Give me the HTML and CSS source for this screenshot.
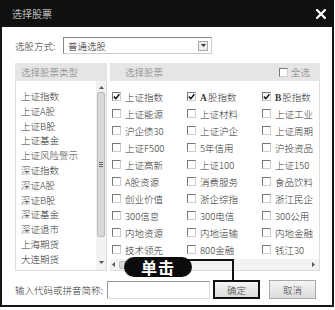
FILE: index.html
```html
<!DOCTYPE html>
<html lang="zh">
<head>
<meta charset="utf-8">
<title>选择股票</title>
<link rel="stylesheet" href="styles.css">
</head>
<body>
<div class="dialog">
  <div class="titlebar">
    <span class="title">选择股票</span>
    <svg class="close" width="10" height="10" viewBox="0 0 10 10"><path d="M1 1L9 9M9 1L1 9" stroke="#fff" stroke-width="2.2" stroke-linecap="square"/></svg>
  </div>
  <div class="body">
    <div class="mode-row">
      <span class="mode-label">选股方式:</span>
      <div class="select">
        <span class="select-text">普通选股</span>
        <span class="drop"><svg width="5" height="3" viewBox="0 0 5 3"><path d="M0 0H5L2.5 3Z" fill="#333"/></svg></span>
      </div>
    </div>
    <div class="panels">
      <div class="left-panel">
        <div class="head head-left">选择股票类型</div>
        <div class="list-box">
          <ul class="type-list">
            <li>上证指数</li>
            <li>上证A股</li>
            <li>上证B股</li>
            <li>上证基金</li>
            <li>上证风险警示</li>
            <li>深证指数</li>
            <li>深证A股</li>
            <li>深证B股</li>
            <li>深证基金</li>
            <li>深证退市</li>
            <li>上海期货</li>
            <li>大连期货</li>
            <li>郑州期货</li>
          </ul>
          <div class="vscroll">
            <svg class="arr" width="5" height="3" viewBox="0 0 5 3"><path d="M0 3H5L2.5 0Z" fill="#555"/></svg>
            <div class="vthumb"><span class="grip"></span></div>
            <svg class="arr" width="5" height="3" viewBox="0 0 5 3"><path d="M0 0H5L2.5 3Z" fill="#555"/></svg>
          </div>
        </div>
      </div>
      <div class="right-panel">
        <div class="head head-right">
          <span>选择股票</span>
          <span class="all"><span class="cb"></span>全选</span>
        </div>
        <div class="check-area">
          <div class="check-grid">
            <label class="item"><span class="cb on"><svg width="7" height="7" viewBox="0 0 7 7"><path d="M0.8 3.6L2.8 5.6L6.4 1.2" stroke="#111" stroke-width="1.5" fill="none"/></svg></span>上证指数</label>
            <label class="item"><span class="cb on"><svg width="7" height="7" viewBox="0 0 7 7"><path d="M0.8 3.6L2.8 5.6L6.4 1.2" stroke="#111" stroke-width="1.5" fill="none"/></svg></span><span><b class="serif">A</b>股指数</span></label>
            <label class="item"><span class="cb on"><svg width="7" height="7" viewBox="0 0 7 7"><path d="M0.8 3.6L2.8 5.6L6.4 1.2" stroke="#111" stroke-width="1.5" fill="none"/></svg></span><span><b class="serif">B</b>股指数</span></label>
            <label class="item"><span class="cb"></span>上证能源</label>
            <label class="item"><span class="cb"></span>上证材料</label>
            <label class="item"><span class="cb"></span>上证工业</label>
            <label class="item"><span class="cb"></span>沪企债30</label>
            <label class="item"><span class="cb"></span>上证沪企</label>
            <label class="item"><span class="cb"></span>上证周期</label>
            <label class="item"><span class="cb"></span>上证F500</label>
            <label class="item"><span class="cb"></span>5年信用</label>
            <label class="item"><span class="cb"></span>沪投资品</label>
            <label class="item"><span class="cb"></span>上证高新</label>
            <label class="item"><span class="cb"></span>上证100</label>
            <label class="item"><span class="cb"></span>上证150</label>
            <label class="item"><span class="cb"></span>A股资源</label>
            <label class="item"><span class="cb"></span>消费服务</label>
            <label class="item"><span class="cb"></span>食品饮料</label>
            <label class="item"><span class="cb"></span>创业价值</label>
            <label class="item"><span class="cb"></span>浙企综指</label>
            <label class="item"><span class="cb"></span>浙江民企</label>
            <label class="item"><span class="cb"></span>300信息</label>
            <label class="item"><span class="cb"></span>300电信</label>
            <label class="item"><span class="cb"></span>300公用</label>
            <label class="item"><span class="cb"></span>内地资源</label>
            <label class="item"><span class="cb"></span>内地运输</label>
            <label class="item"><span class="cb"></span>内地金融</label>
            <label class="item"><span class="cb"></span>技术领先</label>
            <label class="item"><span class="cb"></span>800金融</label>
            <label class="item"><span class="cb"></span>钱江30</label>
          </div>
          <div class="hscroll">
            <svg class="harr" width="3" height="5" viewBox="0 0 3 5"><path d="M3 0V5L0 2.5Z" fill="#555"/></svg>
            <div class="hthumb"></div>
            <svg class="harr" width="3" height="5" viewBox="0 0 3 5"><path d="M0 0V5L3 2.5Z" fill="#555"/></svg>
          </div>
        </div>
      </div>
    </div>
    <div class="bottom-row">
      <span class="code-label">输入代码或拼音简称:</span>
      <div class="code-input"></div>
      <button class="btn btn-ok">确定</button>
      <button class="btn btn-cancel">取消</button>
    </div>
  </div>
  <div class="callout-line"></div>
  <div class="callout">单击</div>
</div>
</body>
</html>
```

FILE: styles.css
```css
* { box-sizing: border-box; }
html, body { margin: 0; padding: 0; background: #fff; }
body {
  font-family: "Noto Sans CJK SC", "Noto Sans", sans-serif;
  font-size: 9.5px;
  font-weight: 300;
  color: #333;
}
.dialog {
  position: relative;
  width: 334px;
  height: 307px;
  border: 2px solid #151515;
  border-top: 0;
  background: #fff;
}
.titlebar {
  height: 27px;
  background: #111;
  margin: 0 -2px;
  display: flex;
  align-items: center;
  justify-content: space-between;
  padding: 0 8px 0 12px;
}
.title { color: #f2f2f2; font-size: 10px; }
.close { display: block; }

.body { padding: 10px 12px 0 13px; }

.mode-row { display: flex; align-items: center; height: 17px; }
.mode-label { width: 48px; white-space: nowrap; }
.select {
  width: 149px;
  height: 17px;
  border: 1px solid #888;
  border-right-color: #ccc;
  border-bottom-color: #ccc;
  display: flex;
  align-items: center;
  justify-content: space-between;
  padding: 0 3px 0 4px;
  color: #222;
}
.drop {
  width: 10px;
  height: 10px;
  border: 1px solid #aaa;
  background: #eee;
  display: flex;
  align-items: center;
  justify-content: center;
}
.drop svg { display: block; }

.panels { display: flex; gap: 3px; margin-top: 9px; height: 208px; }
.head {
  height: 18px;
  background: #e5e5e5;
  color: #808080;
  display: flex;
  align-items: center;
}
.left-panel { width: 92px; display: flex; flex-direction: column; }
.head-left { padding-left: 6px; }
.list-box {
  flex: 1;
  display: flex;
  border: 1px solid #ddd;
  border-top: 0;
  overflow: hidden;
}
.type-list {
  list-style: none;
  margin: 0;
  padding: 8px 0 0 5px;
  flex: 1;
  overflow: hidden;
}
.type-list li { height: 14.8px; line-height: 14.8px; white-space: nowrap; }
.vscroll {
  width: 10px;
  background: #f2f2f2;
  display: flex;
  flex-direction: column;
  align-items: center;
  padding: 5px 0 6px;
}
.arr { display: block; }
.vthumb {
  width: 8px;
  flex: 0 0 145px;
  margin: 3px 0 auto;
  background: #d8d8d8;
  border: 1px solid #bbb;
  border-radius: 2px;
  display: flex;
  align-items: center;
  justify-content: center;
}
.grip {
  width: 4px;
  height: 5px;
  border-top: 1px solid #666;
  border-bottom: 1px solid #666;
  position: relative;
}
.grip::after {
  content: "";
  position: absolute;
  left: 0; right: 0; top: 1px;
  border-top: 1px solid #666;
}

.right-panel { width: 210px; display: flex; flex-direction: column; }
.head-right { justify-content: space-between; padding: 0 10px 0 15px; }
.all { display: flex; align-items: center; gap: 3px; }
.check-area {
  flex: 1;
  display: flex;
  flex-direction: column;
  border-right: 1px solid #ddd;
  border-bottom: 1px solid #ddd;
}
.check-grid {
  flex: 1;
  display: grid;
  grid-template-columns: 75px 75px 60px;
  grid-auto-rows: 17px;
  padding: 7px 0 0 2px;
  overflow: hidden;
}
.item { display: flex; align-items: center; gap: 4px; white-space: nowrap; color: #333; }
.cb {
  width: 9px;
  height: 9px;
  border: 1px solid #777;
  border-right-color: #ccc;
  border-bottom-color: #ccc;
  background: #fff;
  display: inline-flex;
  align-items: center;
  justify-content: center;
  flex: none;
}
.cb svg { display: block; }
.serif { font-family: "Liberation Serif", serif; font-weight: bold; margin-right: 1px; }

.hscroll {
  height: 11px;
  background: #f2f2f2;
  display: flex;
  align-items: center;
  padding: 0 4px 0 2px;
}
.harr { display: block; }
.hthumb {
  width: 70px;
  height: 8px;
  margin: 0 auto 0 4px;
  background: #d8d8d8;
  border: 1px solid #bbb;
  border-radius: 2px;
}

.bottom-row {
  display: flex;
  align-items: center;
  margin-top: 9px;
  height: 19px;
}
.code-label { width: 92px; white-space: nowrap; }
.code-input {
  width: 103px;
  height: 18px;
  border: 1px solid #999;
  border-right-color: #ddd;
  border-bottom-color: #ddd;
}
.btn {
  font: inherit;
  color: #444;
  height: 19px;
  width: 47px;
  padding: 0;
  background: linear-gradient(#f4f4f4, #dcdcdc);
  border: 1px solid #aaa;
}
.btn-ok { margin-left: 3px; border: 2px solid #111; }
.btn-cancel { margin-left: 9px; }

.callout {
  position: absolute;
  left: 122px;
  top: 257px;
  width: 68px;
  height: 20px;
  border-radius: 10px;
  background: #0c0c0c;
  color: #fff;
  font-weight: bold;
  font-size: 16px;
  line-height: 20px;
  text-align: center;
  letter-spacing: 1px;
}
.callout-line {
  position: absolute;
  left: 180px;
  top: 259px;
  width: 52px;
  height: 21px;
  border-top: 2px solid #111;
  border-right: 2px solid #111;
}
```
